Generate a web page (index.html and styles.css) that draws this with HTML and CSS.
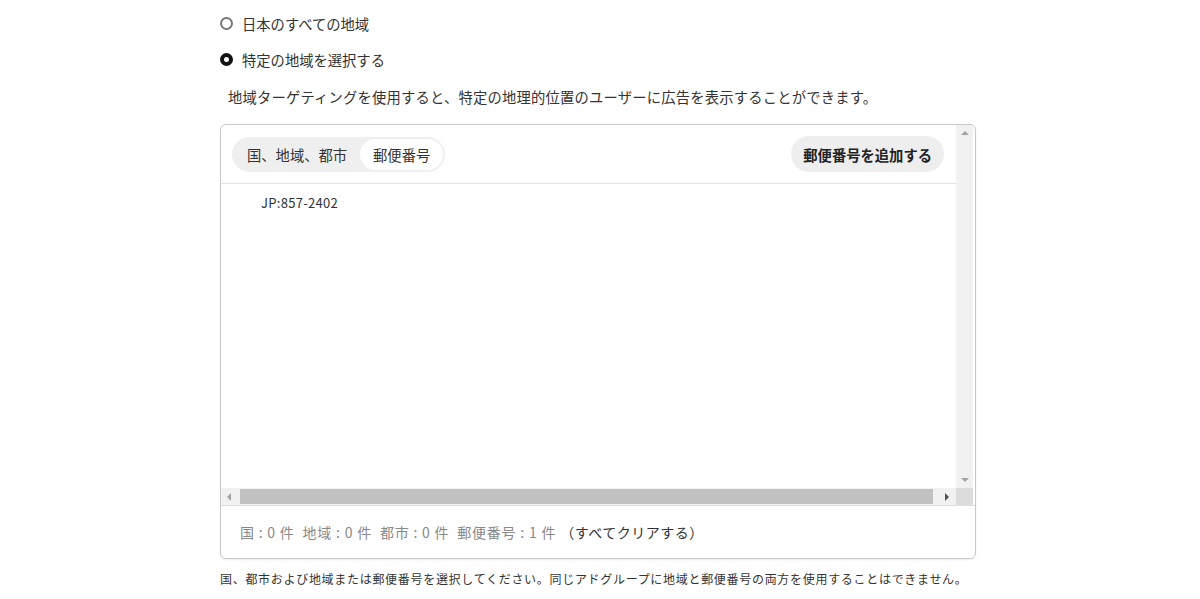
FILE: index.html
```html
<!DOCTYPE html>
<html lang="ja">
<head>
<meta charset="UTF-8">
<title>地域ターゲティング</title>
<link rel="stylesheet" href="styles.css">
</head>
<body>
<div class="page">
    <label class="option">
        <span class="radio"></span>
        <span>日本のすべての地域</span>
    </label>
    <label class="option">
        <span class="radio checked"></span>
        <span>特定の地域を選択する</span>
    </label>
    <p class="desc">地域ターゲティングを使用すると、特定の地理的位置のユーザーに広告を表示することができます。</p>

    <div class="box">
        <div class="scroller">
            <div class="content">
                <div class="toolbar">
                    <div class="tabs">
                        <span class="tab">国、地域、都市</span>
                        <span class="tab active">郵便番号</span>
                    </div>
                    <button class="add">郵便番号を追加する</button>
                </div>
                <div class="list">
                    <div class="item">JP:857-2402</div>
                </div>
            </div>
            <div class="vbar">
                <span class="arrow up"></span>
                <span class="arrow down"></span>
            </div>
            <div class="hbar">
                <span class="arrow left"></span>
                <span class="thumb"></span>
                <span class="arrow right"></span>
            </div>
            <div class="corner"></div>
        </div>
        <div class="summary">
            <span class="counts">国 : 0 件&nbsp; 地域 : 0 件&nbsp; 都市 : 0 件&nbsp; 郵便番号 : 1 件</span>
            <a class="clear">（すべてクリアする）</a>
        </div>
    </div>

    <p class="note">国、都市および地域または郵便番号を選択してください。同じアドグループに地域と郵便番号の両方を使用することはできません。</p>
</div>
</body>
</html>
```

FILE: styles.css
```css
body {
    margin: 0;
    background-color: #fff;
    color: #333;
    font-family: "Noto Sans CJK JP", "Noto Sans", sans-serif;
    font-size: 14px;
}

.page {
    width: 756px;
    padding: 5px 0 0 220px;
}

.option {
    display: flex;
    align-items: center;
    height: 36px;
    font-size: 14.3px;
}

.radio {
    width: 13px;
    height: 13px;
    box-sizing: border-box;
    border: 2px solid #777;
    border-radius: 50%;
    margin-right: 9px;
}

.radio.checked {
    border: 4px solid #111;
    background-color: #fff;
}

.desc {
    margin: 9px 0 0 8px;
    line-height: 22px;
    font-size: 14.3px;
    letter-spacing: 0.2px;
}

.box {
    margin-top: 16px;
    height: 435px;
    box-sizing: border-box;
    border: 1px solid #c8c8c8;
    border-radius: 6px;
    box-shadow: 0 1px 2px rgba(0,0,0,0.08);
    display: flex;
    flex-direction: column;
    overflow: hidden;
}

.scroller {
    display: grid;
    grid-template-columns: 1fr 17px;
    grid-template-rows: 363px 17px;
    padding-right: 2px;
}

.content {
    overflow: hidden;
}

.toolbar {
    display: flex;
    justify-content: space-between;
    align-items: center;
    height: 58px;
    padding: 0 12px 0 11px;
    border-bottom: 1px solid #e2e2e2;
}

.tabs {
    display: flex;
    background-color: #efefef;
    border-radius: 18px;
    padding: 2px;
}

.tab {
    padding: 0 13px;
    line-height: 31px;
    border-radius: 16px;
    font-size: 14.3px;
    color: #333;
}

.tab.active {
    background-color: #fff;
}

.add {
    border: none;
    background-color: #eee;
    border-radius: 18px;
    height: 36px;
    padding: 0 12px;
    font-family: inherit;
    font-size: 14.3px;
    font-weight: bold;
    color: #222;
}

.list {
    padding: 10px 0 0 40px;
}

.item {
    font-size: 13px;
    line-height: 18px;
    color: #333;
    letter-spacing: 0.3px;
}

.vbar {
    background-color: #f1f1f1;
    display: flex;
    flex-direction: column;
    justify-content: space-between;
    align-items: center;
    padding: 6px 0;
}

.hbar {
    background-color: #f1f1f1;
    display: flex;
    align-items: center;
}

.corner {
    background-color: #dcdcdc;
}

.arrow {
    width: 0;
    height: 0;
    border: 4px solid transparent;
}

.arrow.up {
    border-bottom-color: #a3a3a3;
    border-top-width: 0;
}

.arrow.down {
    border-top-color: #a3a3a3;
    border-bottom-width: 0;
}

.arrow.left {
    border-right-color: #a3a3a3;
    border-left-width: 0;
    margin: 0 7px 0 6px;
}

.arrow.right {
    border-left-color: #505050;
    border-right-width: 0;
    margin: 0 7px 0 12px;
}

.thumb {
    flex: 1;
    height: 15px;
    margin-left: 2px;
    background-color: #c1c1c1;
}

.summary {
    flex: 1;
    border-top: 1px solid #ddd;
    display: flex;
    align-items: center;
    padding-left: 19px;
    font-size: 14px;
    letter-spacing: 0.8px;
}

.counts {
    color: #888;
    margin-right: 4px;
}

.clear {
    color: #333;
    cursor: pointer;
    letter-spacing: 0.5px;
}

.note {
    margin: 11px 0 0;
    font-size: 12px;
    line-height: 18px;
    color: #333;
    letter-spacing: 0.7px;
}
```
